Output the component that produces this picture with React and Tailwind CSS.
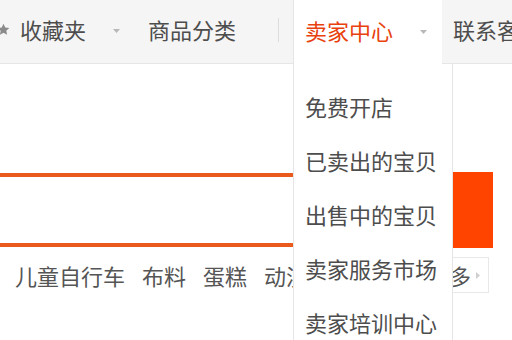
import React from "react";

const font = { fontFamily: '"Noto Sans CJK SC", "Noto Sans", sans-serif' };

const Caret = () => (
  <svg width="7" height="4" viewBox="0 0 7 4" className="shrink-0">
    <path d="M0 0h7L3.5 4z" fill="#b8b8b8" />
  </svg>
);

const menuItems = ["免费开店", "已卖出的宝贝", "出售中的宝贝", "卖家服务市场", "卖家培训中心"];
const hotWords = ["儿童自行车", "布料", "蛋糕", "动漫"];

export default function App() {
  return (
    <div className="relative w-[512px] h-[340px] overflow-hidden bg-white" style={font}>
      {/* top site nav */}
      <div className="flex items-center h-[64px] pb-[4px] bg-[#f5f5f5] border-b border-[#e6e6e6] text-[22px] text-[#4d4d4d] whitespace-nowrap">
        <div className="w-[130px] flex items-center shrink-0">
          <svg width="13" height="13" viewBox="0 0 24 24" className="-ml-[3px] shrink-0">
            <path d="M12 1.5l3.2 7 7.6.8-5.7 5.1 1.6 7.5L12 18l-6.7 3.9 1.6-7.5L1.2 9.3l7.6-.8z" fill="#8a8a8a" />
          </svg>
          <span className="ml-[10px]">收藏夹</span>
          <span className="ml-[27px] pt-[3px]"><Caret /></span>
        </div>
        <div className="w-[148px] pl-[18px] shrink-0">商品分类</div>
        <div className="w-px h-[24px] bg-[#dcdcdc] shrink-0" />
        <div className="w-[14px] shrink-0" />
        <div className="relative z-10 self-start shrink-0 w-[149px] h-[64px] pb-[4px] bg-white border-l border-[#e5e5e5] flex items-center pl-[11px]">
          <span className="text-[#e8410e]">卖家中心</span>
          <span className="ml-[27px] pt-[3px]"><Caret /></span>
          <div className="absolute top-[64px] -left-px w-[160px] h-[300px] bg-white border-x border-b border-[#e5e5e5] pt-[15px] text-[#4d4d4d]">
            {menuItems.map((t) => (
              <div key={t} className="h-[54px] leading-[54px] pl-[11px]">{t}</div>
            ))}
          </div>
        </div>
        <div className="pl-[11px] shrink-0">联系客服</div>
      </div>

      {/* search */}
      <div className="flex items-center mt-[108px]">
        <div className="w-[453px] h-[74px] border-y-4 border-[#ea5a1c] shrink-0" />
        <div className="w-[40px] h-[76px] bg-[#ff4400] shrink-0" />
      </div>

      {/* hot words */}
      <div className="flex items-center mt-[9px] pl-[15px] text-[22px] text-[#555] whitespace-nowrap">
        <div className="flex gap-[17px]">
          {hotWords.map((w) => (
            <span key={w}>{w}</span>
          ))}
        </div>
        <div className="ml-auto mr-[23px] h-[36px] flex items-center border border-[#e8e8e8] pl-[6px] pr-[8px]">
          <span>更多</span>
          <svg width="4" height="7" viewBox="0 0 4 7" className="ml-[5px]">
            <path d="M0 0l4 3.5L0 7z" fill="#cfcfcf" />
          </svg>
        </div>
      </div>
    </div>
  );
}
